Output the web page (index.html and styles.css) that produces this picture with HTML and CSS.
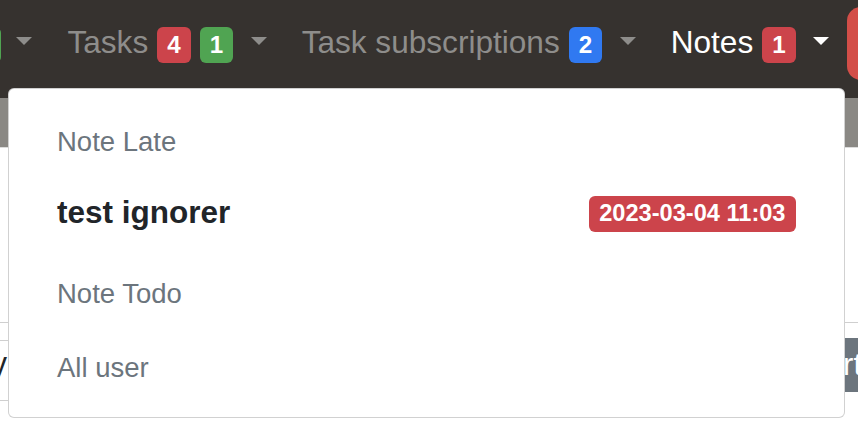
FILE: index.html
```html
<!DOCTYPE html>
<html lang="en">
<head>
<meta charset="utf-8">
<title>Notes</title>
<link rel="stylesheet" href="styles.css">
</head>
<body>
<header class="navbar">
  <ul class="nav-list">
    <li class="nav-link"><span class="badge badge-green">1</span><span class="caret"></span></li>
    <li class="nav-link">Tasks<span class="badge badge-red">4</span><span class="badge badge-green badge-next">1</span><span class="caret"></span></li>
    <li class="nav-link">Task subscriptions<span class="badge badge-blue">2</span><span class="caret"></span></li>
    <li class="nav-link nav-link-active">Notes<span class="badge badge-red">1</span><span class="caret"></span></li>
    <li class="nav-btn"></li>
  </ul>
</header>
<div class="subbar"></div>
<main class="content">
  <div class="area"></div>
  <div class="row">
    <div class="cell"><span class="cell-text">Weekly</span></div>
    <div class="btn">Start</div>
  </div>
</main>
<div class="dropdown-menu">
  <div class="menu-header">Note Late</div>
  <div class="menu-item">
    <span class="item-title">test ignorer</span>
    <span class="badge badge-red badge-date">2023-03-04 11:03</span>
  </div>
  <div class="menu-header menu-header-second">Note Todo</div>
  <div class="menu-header menu-header-last">All user</div>
</div>
</body>
</html>
```

FILE: styles.css
```css
html, body {
  margin: 0;
  padding: 0;
  overflow: hidden;
  width: 858px;
  height: 424px;
  background: #ffffff;
  font-family: "Liberation Sans", Arial, Helvetica, sans-serif;
}

.navbar {
  height: 98px;
  background: #36322f;
  overflow: hidden;
}

.nav-list {
  display: flex;
  align-items: flex-start;
  list-style: none;
  margin: 0 0 0 -49.5px;
  padding: 0;
}

.nav-link {
  flex-shrink: 0;
  padding: 19px 17.5px 0;
  font-size: 31.6px;
  line-height: 47px;
  color: #8e8d8b;
  white-space: nowrap;
}

.nav-link-active {
  color: #ffffff;
}

.badge {
  display: inline-block;
  font-size: 24.2px;
  font-weight: 700;
  line-height: 1;
  color: #ffffff;
  padding: 6px 10px;
  border-radius: 6px;
  margin-left: 9px;
  vertical-align: baseline;
}

.badge-red { background: #cc444b; }
.badge-green { background: #50a452; }
.badge-blue { background: #3079f1; }

.nav-link:first-child .badge { margin-left: 0; }

.caret {
  display: inline-block;
  width: 0;
  height: 0;
  margin-left: 17.5px;
  vertical-align: 8.2px;
  border-top: 8px solid currentColor;
  border-left: 8.5px solid transparent;
  border-right: 8.5px solid transparent;
}

.nav-link:first-child .caret { margin-left: 15px; }

.nav-btn {
  flex-shrink: 0;
  width: 60px;
  height: 73px;
  margin-top: 7px;
  background: #d34e48;
  border-radius: 14px;
}

.subbar {
  height: 49px;
  background: #8a8884;
  border-bottom: 1px solid #dcdcdc;
}

.area {
  height: 174px;
  border-bottom: 1px solid #cfcfcf;
}

.row {
  display: flex;
  justify-content: space-between;
  align-items: flex-start;
  margin-right: -16px;
}

.cell {
  width: 120px;
  margin-top: 17px;
  height: 59px;
  border-top: 1px solid #cfcfcf;
  border-bottom: 1px solid #cfcfcf;
  overflow: hidden;
}

.cell-text {
  display: block;
  margin-left: -94px;
  font-size: 31px;
  line-height: 46px;
  color: #212529;
  white-space: nowrap;
}

.btn {
  margin-top: 15px;
  height: 54px;
  padding: 0 12px;
  background: #6c757d;
  color: #ffffff;
  font-size: 31px;
  line-height: 54px;
  border-radius: 6px 0 0 6px;
}

.dropdown-menu {
  position: absolute;
  left: 8px;
  top: 88px;
  width: 837px;
  box-sizing: border-box;
  padding: 18px 0 14px;
  background: #ffffff;
  border: 1px solid rgba(0, 0, 0, 0.18);
  border-radius: 6px;
}

.menu-header {
  padding: 0 48px;
  height: 70px;
  line-height: 70px;
  font-size: 27.5px;
  color: #6c757d;
  white-space: nowrap;
}

.menu-header-second { margin-top: 12px; }
.menu-header-last { margin-top: 3.5px; }

.menu-item {
  display: flex;
  align-items: center;
  justify-content: space-between;
  padding: 0 48px;
  height: 70px;
}

.item-title {
  font-size: 31.5px;
  font-weight: 700;
  line-height: 70px;
  color: #212529;
}

.badge-date {
  margin-left: 0;
  margin-top: 4px;
  padding: 6px 10.5px;
  font-size: 23.6px;
}
```
